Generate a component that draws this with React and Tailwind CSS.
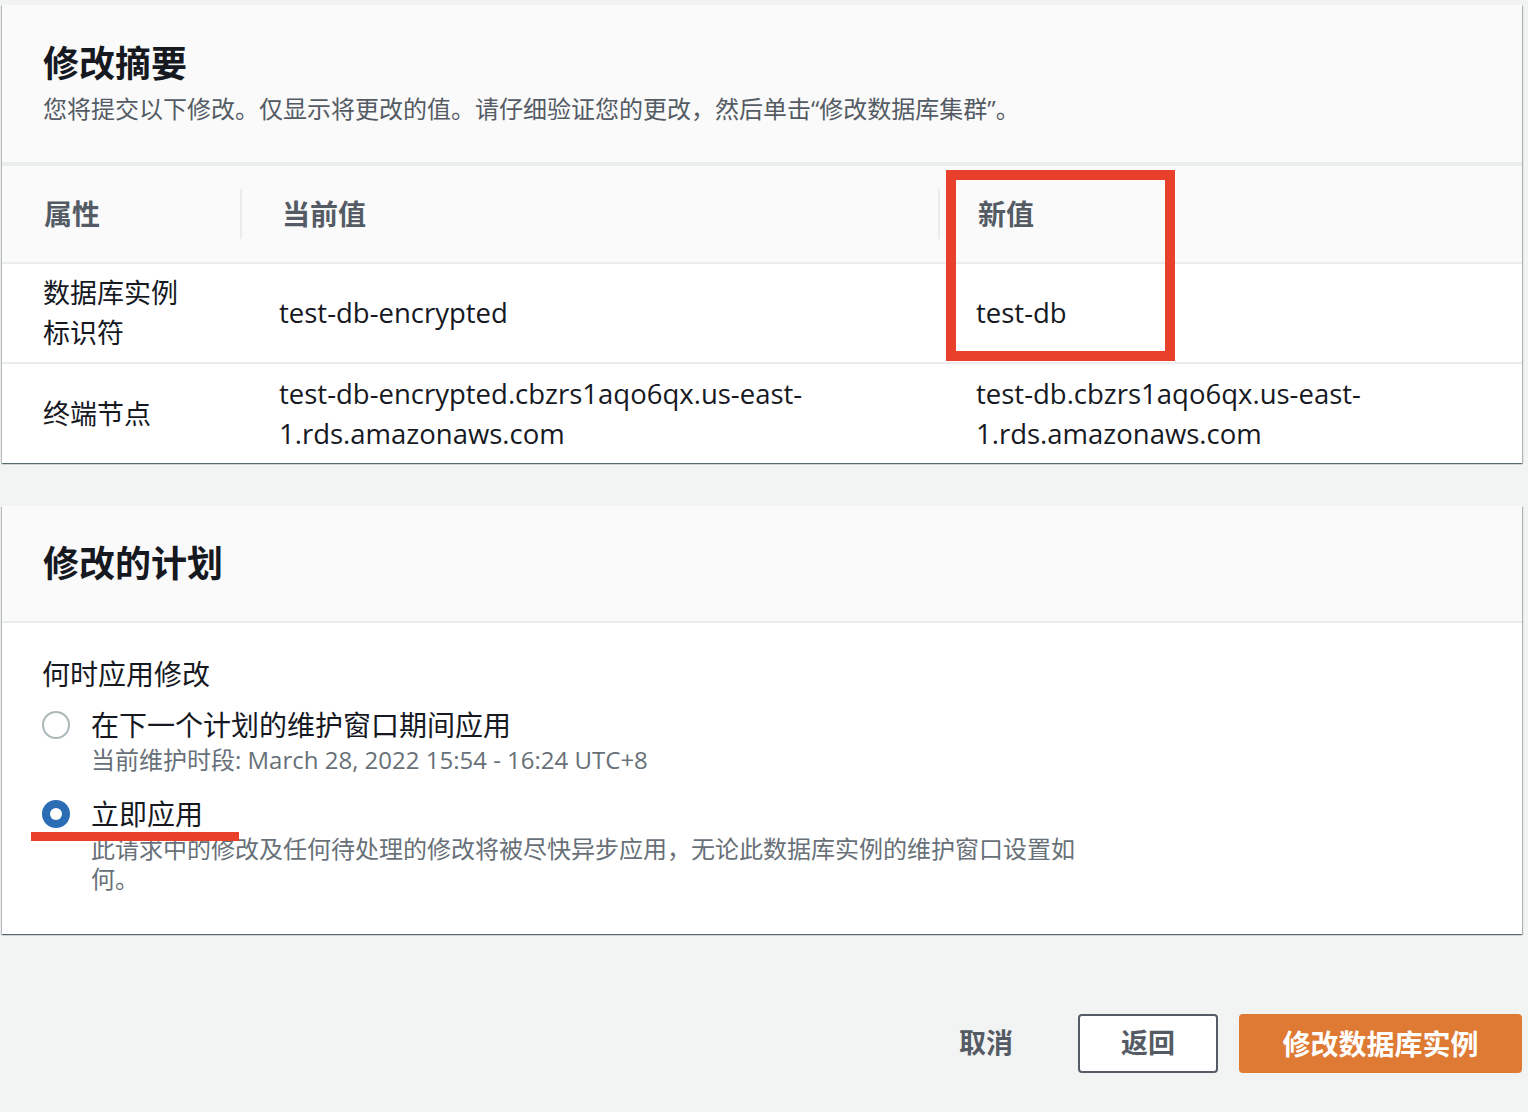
import React from "react";

const FONT = { fontFamily: "'Open Sans', 'Noto Sans CJK SC', sans-serif" };

function Radio({ checked }) {
  return checked ? (
    <span className="flex h-[28px] w-[28px] shrink-0 items-center justify-center rounded-full bg-[#2a6db4]">
      <span className="h-[12px] w-[12px] rounded-full bg-white" />
    </span>
  ) : (
    <span className="h-[28px] w-[28px] shrink-0 rounded-full border-2 border-[#aab7b8] bg-white" />
  );
}

export default function App() {
  return (
    <div
      className="relative min-h-[1112px] w-[1528px] bg-[#f2f3f3] pt-[5px] text-[#16191f]"
      style={FONT}
    >
      {/* Card 1 */}
      <section className="ml-[2px] w-[1520px] bg-white shadow-[0_1px_1px_0_rgba(0,28,36,0.4),1px_1px_1px_0_rgba(0,28,36,0.25),-1px_1px_1px_0_rgba(0,28,36,0.2)]">
        <div className="h-[157px] bg-[#fafafa] px-[41px] pt-[37px]">
          <h2 className="text-[36px] font-bold leading-[44px]">修改摘要</h2>
          <p className="mt-[8px] text-[24px] leading-[30px] text-[#545b64]">
            您将提交以下修改。仅显示将更改的值。请仔细验证您的更改，然后单击“修改数据库集群”。
          </p>
        </div>
        <div className="h-[4px] bg-[#eaeded]" />
        <div className="grid grid-cols-[238px_698px_1fr]">
          {/* header row */}
          <div className="flex h-[96px] items-center bg-[#fafafa] pl-[42px] text-[28px] font-bold text-[#545b64]">
            属性
          </div>
          <div className="flex h-[96px] items-center border-l-2 border-[#eaeded] bg-[#fafafa] pl-[40px] text-[28px] font-bold text-[#545b64] [border-image:linear-gradient(to_bottom,transparent_24px,#eaeded_24px,#eaeded_72px,transparent_72px)_1]">
            当前值
          </div>
          <div className="flex h-[96px] items-center border-l-2 border-[#eaeded] bg-[#fafafa] pl-[38px] text-[28px] font-bold text-[#545b64] [border-image:linear-gradient(to_bottom,transparent_24px,#eaeded_24px,#eaeded_72px,transparent_72px)_1]">
            新值
          </div>
          {/* row 1 */}
          <div className="col-span-3 h-[2px] bg-[#eaeded]" />
          <div className="flex h-[98px] items-center pl-[41px] text-[27px] leading-[40px]">
            <span>
              数据库实例
              <br />
              标识符
            </span>
          </div>
          <div className="flex h-[98px] items-center pl-[39px] text-[27.5px] leading-[40px]">
            test-db-encrypted
          </div>
          <div className="flex h-[98px] items-center pl-[38px] text-[27.5px] leading-[40px]">
            test-db
          </div>
          {/* row 2 */}
          <div className="col-span-3 h-[2px] bg-[#eaeded]" />
          <div className="flex h-[99px] items-center pl-[41px] text-[27px] leading-[40px]">
            终端节点
          </div>
          <div className="flex h-[99px] items-center pl-[39px] text-[27.5px] leading-[40px]">
            <span>
              test-db-encrypted.cbzrs1aqo6qx.us-east-
              <br />
              1.rds.amazonaws.com
            </span>
          </div>
          <div className="flex h-[99px] items-center pl-[38px] text-[27.5px] leading-[40px]">
            <span>
              test-db.cbzrs1aqo6qx.us-east-
              <br />
              1.rds.amazonaws.com
            </span>
          </div>
        </div>
      </section>

      {/* Card 2 */}
      <section className="ml-[2px] mt-[43px] w-[1520px] bg-white shadow-[0_1px_1px_0_rgba(0,28,36,0.4),1px_1px_1px_0_rgba(0,28,36,0.25),-1px_1px_1px_0_rgba(0,28,36,0.2)]">
        <div className="flex h-[117px] items-center border-b-2 border-[#eaeded] bg-[#fafafa] px-[41px]">
          <h2 className="text-[36px] font-bold leading-[44px]">修改的计划</h2>
        </div>
        <div className="px-[40px] pb-[40px] pt-[33px]">
          <div className="text-[28px] leading-[36px]">何时应用修改</div>
          <div className="mt-[13px] flex gap-[21px]">
            <div className="flex h-[40px] items-center">
              <Radio checked={false} />
            </div>
            <div>
              <div className="text-[28px] leading-[40px]">在下一个计划的维护窗口期间应用</div>
              <div className="text-[24px] leading-[30px] text-[#687078]">
                当前维护时段: March 28, 2022 15:54 - 16:24 UTC+8
              </div>
            </div>
          </div>
          <div className="mt-[19px] flex gap-[21px]">
            <div className="flex h-[40px] items-center">
              <Radio checked={true} />
            </div>
            <div>
              <div className="text-[28px] leading-[40px]">立即应用</div>
              <div className="max-w-[990px] text-[24px] leading-[30px] text-[#687078]">
                此请求中的修改及任何待处理的修改将被尽快异步应用，无论此数据库实例的维护窗口设置如何。
              </div>
            </div>
          </div>
        </div>
      </section>

      {/* Buttons */}
      <div className="mt-[80px] flex w-[1522px] items-center justify-end">
        <button className="mr-[65px] text-[27px] font-bold text-[#545b64]">取消</button>
        <button className="flex h-[59px] w-[140px] items-center justify-center rounded-[4px] border-2 border-[#545b64] bg-white text-[27px] font-bold text-[#545b64]">
          返回
        </button>
        <button className="ml-[21px] flex h-[59px] w-[283px] items-center justify-center rounded-[4px] bg-[#de7a33] text-[28px] font-bold text-white">
          修改数据库实例
        </button>
      </div>

      {/* Annotations */}
      <div className="absolute left-[946px] top-[170px] h-[191px] w-[229px] border-[10px] border-[#e8402a]" />
      <div className="absolute left-[31px] top-[832px] h-[9px] w-[208px] bg-[#e8402a]" />
    </div>
  );
}
